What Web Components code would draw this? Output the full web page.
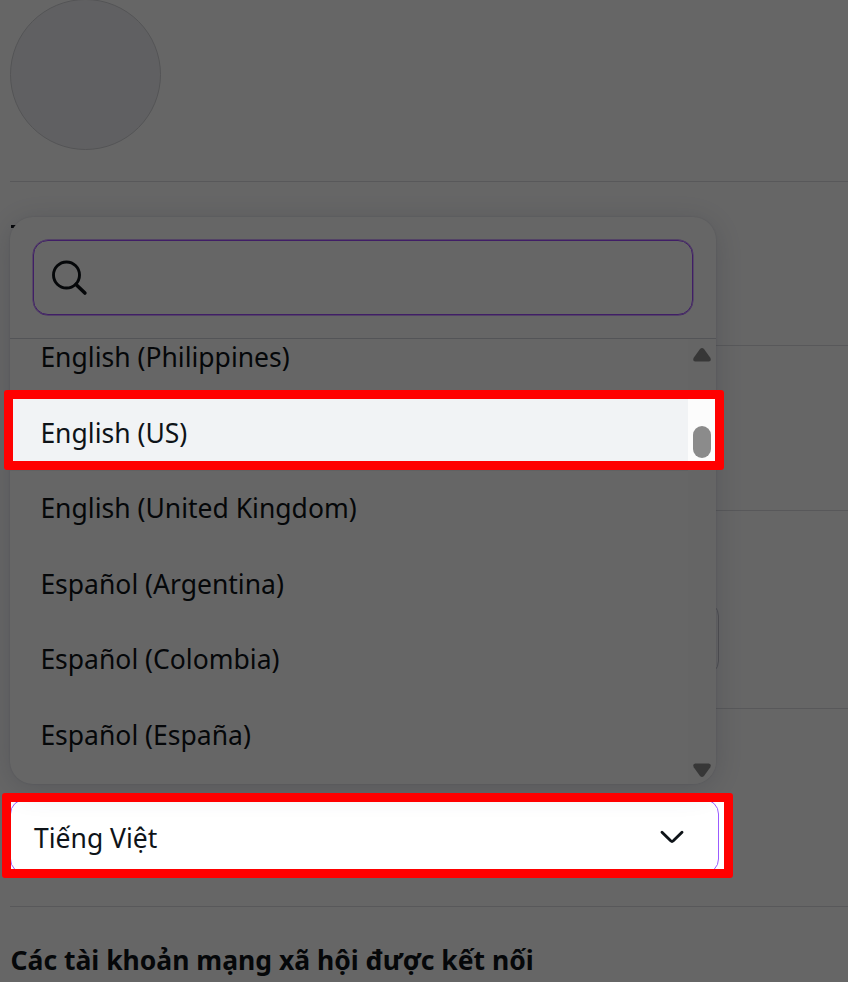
<!DOCTYPE html>
<html lang="vi">
<head>
<meta charset="utf-8">
<title>Cài đặt tài khoản</title>
<style>
  body {
    margin: 0;
    width: 848px;
    height: 982px;
    overflow: hidden;
    background: #fff;
    color: #0e1318;
    font: 26.5px/36px "Noto Sans", sans-serif;
  }
</style>
</head>
<body>
<settings-page></settings-page>

<script>
// One block of the settings page, closed by a thin divider
class SettingsSection extends HTMLElement {
  constructor() {
    super();
    this.attachShadow({ mode: 'open' });
    this.shadowRoot.innerHTML = `
      <style>
        :host {
          display: block;
          box-sizing: border-box;
          border-bottom: 1px solid #dcdde1;
        }
      </style>
      <slot></slot>
    `;
  }
}
customElements.define('settings-section', SettingsSection);

class UserAvatar extends HTMLElement {
  constructor() {
    super();
    this.attachShadow({ mode: 'open' });
    this.shadowRoot.innerHTML = `
      <style>
        :host {
          display: block;
          box-sizing: border-box;
          width: 151px;
          height: 151px;
          border: 1px solid #d0d1d6;
          border-radius: 50%;
          background: #f1f1f4;
        }
      </style>
    `;
  }
}
customElements.define('user-avatar', UserAvatar);

// Closed select: value on the left, chevron on the right
class SelectField extends HTMLElement {
  constructor() {
    super();
    this.attachShadow({ mode: 'open' });
    this.shadowRoot.innerHTML = `
      <style>
        :host {
          display: flex;
          align-items: center;
          justify-content: space-between;
          box-sizing: border-box;
          width: 709px;
          height: 75px;
          padding: 0 31px 0 23px;
          border: 1px solid #c4c6cd;
          border-radius: 15px;
          background: #fff;
        }
        :host([active]) { border-color: #9b5cff; }
        :host(:not([active])) svg { display: none; }
        .value { padding-top: 2px; }
        svg { display: block; }
      </style>
      <span class="value"><slot></slot></span>
      <svg width="30" height="20" viewBox="0 0 30 20" fill="none" stroke="#0e1318" stroke-width="2.9" stroke-linecap="round" stroke-linejoin="round">
        <path d="M5 5.300l8.700 8.500q1.300 1.200 2.600 0L25 5.300"/>
      </svg>
    `;
  }
}
customElements.define('select-field', SelectField);

class SearchBox extends HTMLElement {
  constructor() {
    super();
    this.attachShadow({ mode: 'open' });
    this.shadowRoot.innerHTML = `
      <style>
        :host {
          display: flex;
          align-items: center;
          box-sizing: border-box;
          height: 75px;
          padding-left: 17px;
          border: 1px solid #a04dff;
          box-shadow: 0 0 0 .4px #a04dff;
          border-radius: 15px;
        }
        svg { display: block; }
      </style>
      <svg width="38" height="38" viewBox="0 0 38 38" fill="none" stroke="#0e1318" stroke-width="2.9" stroke-linecap="round">
        <circle cx="15.5" cy="16" r="13"/>
        <path d="M25 25.500l8.900 8.500" stroke-width="3.6"/>
      </svg>
    `;
  }
}
customElements.define('search-box', SearchBox);

class LanguageOption extends HTMLElement {
  constructor() {
    super();
    this.attachShadow({ mode: 'open' });
    this.shadowRoot.innerHTML = `
      <style>
        :host {
          display: flex;
          align-items: center;
          flex: none;
          box-sizing: border-box;
          height: 75.5px;
          padding-left: 30.4px;
          white-space: nowrap;
        }
        :host([highlighted]) { background: #f1f3f5; }
      </style>
      <slot></slot>
    `;
  }
}
customElements.define('language-option', LanguageOption);

class ScrollTrack extends HTMLElement {
  constructor() {
    super();
    this.attachShadow({ mode: 'open' });
    this.shadowRoot.innerHTML = `
      <style>
        :host {
          display: flex;
          flex-direction: column;
          align-items: center;
          box-sizing: border-box;
          width: 28px;
          padding: 9px 0 7px;
          background: #fcfcfc;
        }
        svg { display: block; }
        .thumb {
          width: 18px;
          height: 32px;
          margin: 64px 0 auto;
          border-radius: 9px;
          background: #8b8b8b;
        }
      </style>
      <svg width="18" height="14" viewBox="0 0 18 14" fill="#8b8b8b">
        <path d="M7 1Q9-1 11 1l6.300 8.800q1.500 3.200-1.500 3.700H2.200Q-.8 13 .7 9.800z"/>
      </svg>
      <div class="thumb"></div>
      <svg width="18" height="14" viewBox="0 0 18 14" fill="#8b8b8b">
        <path d="M7 13q2 2 4 0l6.300-8.800q1.500-3.200-1.500-3.700H2.200Q-.8 1 .7 4.200z"/>
      </svg>
    `;
  }
}
customElements.define('scroll-track', ScrollTrack);

// Popup with a search header and a scrolled list
class LanguageMenu extends HTMLElement {
  constructor() {
    super();
    this.attachShadow({ mode: 'open' });
    this.shadowRoot.innerHTML = `
      <style>
        :host {
          display: flex;
          flex-direction: column;
          box-sizing: border-box;
          width: 706px;
          height: 567px;
          overflow: hidden;
          border-radius: 23px;
          background: #fff;
          box-shadow: 0 0 2px rgba(64, 79, 109, .18), 0 4px 30px rgba(64, 70, 109, .2);
        }
        .head {
          padding: 23px 23px;
          border-bottom: 1px solid #d0d1da;
        }
        .body {
          flex: 1;
          display: flex;
          min-height: 0;
        }
        .list {
          flex: 1;
          display: flex;
          flex-direction: column;
          overflow: hidden;
        }
        .rows { margin-top: -19.5px; }
      </style>
      <div class="head"><search-box></search-box></div>
      <div class="body">
        <div class="list"><div class="rows"><slot></slot></div></div>
        <scroll-track></scroll-track>
      </div>
    `;
  }
}
customElements.define('language-menu', LanguageMenu);

// Dark layer with two cut-outs, each outlined by a red frame
class SpotlightOverlay extends HTMLElement {
  constructor() {
    super();
    this.attachShadow({ mode: 'open' });
    this.shadowRoot.innerHTML = `
      <style>
        :host {
          display: block;
          position: absolute;
          inset: 0;
          pointer-events: none;
        }
        .dim {
          position: absolute;
          inset: 0;
          background: rgba(0, 0, 0, .6);
          clip-path: path(evenodd, "M0 0H848V982H0Z M13 399H715V461H13Z M11 802H724V869H11Z");
        }
        .frame {
          position: absolute;
          box-sizing: border-box;
          border: 9px solid #f00;
          border-radius: 3px;
        }
        .option { left: 4px; top: 390px; width: 720px; height: 80px; }
        .field { left: 2px; top: 793px; width: 731px; height: 85px; }
      </style>
      <div class="dim"></div>
      <div class="frame option"></div>
      <div class="frame field"></div>
    `;
  }
}
customElements.define('spotlight-overlay', SpotlightOverlay);

class SettingsPage extends HTMLElement {
  constructor() {
    super();
    this.attachShadow({ mode: 'open' });
    this.shadowRoot.innerHTML = `
      <style>
        :host {
          display: block;
          position: relative;
          width: 848px;
          height: 982px;
          overflow: hidden;
        }
        main { padding-left: 10px; }
        .photo { height: 183px; margin-top: -1px; }
        .name { height: 164px; padding-top: 43px; }
        .mail { height: 165px; }
        .role, .language { height: 198px; padding-top: 90px; }
        .label-edge { width: 6px; height: 3px; margin-left: 1px; background: #0e1318; }
        h2 {
          margin: 35px 0 0 .5px;
          font-size: 26.5px;
          line-height: 36px;
          font-weight: 700;
          white-space: nowrap;
        }
        language-menu { position: absolute; left: 10px; top: 217px; }
      </style>
      <main>
        <settings-section class="photo"><user-avatar></user-avatar></settings-section>
        <settings-section class="name"><div class="label-edge"></div></settings-section>
        <settings-section class="mail"></settings-section>
        <settings-section class="role"><select-field></select-field></settings-section>
        <settings-section class="language"><select-field active>Tiếng Việt</select-field></settings-section>
        <h2>Các tài khoản mạng xã hội được kết nối</h2>
      </main>
      <language-menu>
        <language-option>English (Philippines)</language-option>
        <language-option highlighted>English (US)</language-option>
        <language-option>English (United Kingdom)</language-option>
        <language-option>Español (Argentina)</language-option>
        <language-option>Español (Colombia)</language-option>
        <language-option>Español (España)</language-option>
      </language-menu>
      <spotlight-overlay></spotlight-overlay>
    `;
  }
}
customElements.define('settings-page', SettingsPage);
</script>
</body>
</html>
